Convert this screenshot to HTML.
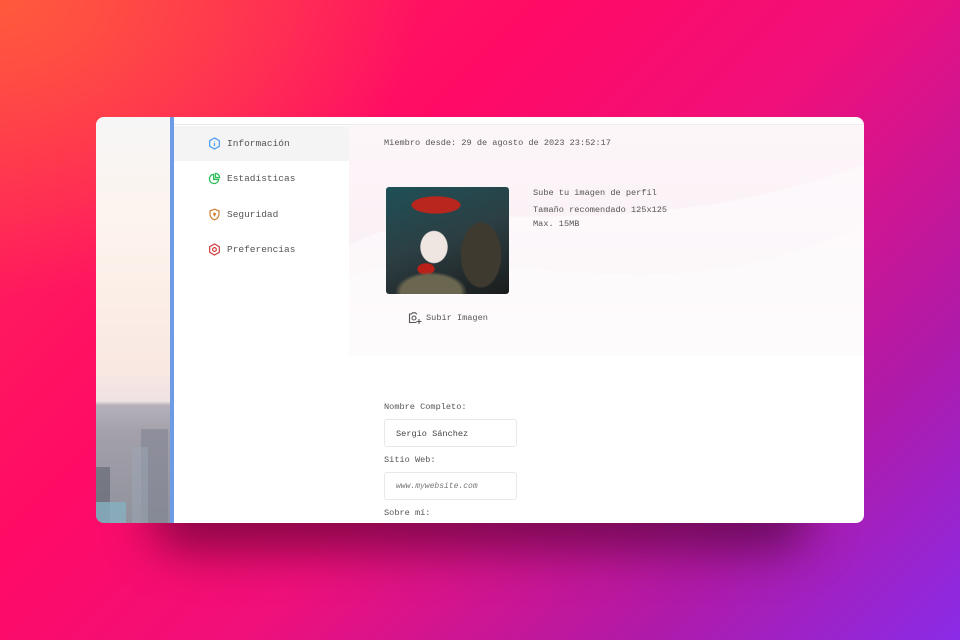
<!DOCTYPE html>
<html><head><meta charset="utf-8"><style>
*{margin:0;padding:0;box-sizing:border-box}
body{width:960px;height:640px;overflow:hidden;position:relative;font-family:"Liberation Mono",monospace;
background:radial-gradient(ellipse 600px 420px at 0% 0%,#ff5a3c 0%,rgba(255,60,70,0) 70%),linear-gradient(135deg,#ff2a55 0%,#ff0a66 35%,#f0107a 55%,#b01aa8 80%,#8a2be8 100%);}
.shadow{position:absolute;left:150px;top:480px;width:660px;height:70px;background:rgba(60,0,40,.6);filter:blur(24px);border-radius:40px}
.win{position:absolute;left:96px;top:117px;width:768px;height:406px;border-radius:8px;overflow:hidden;background:#fff}
.photo{position:absolute;left:0;top:0;width:74px;height:406px;background:linear-gradient(180deg,#f7f6f6 0%,#fdf3ec 30%,#f9e8e2 62%,#efe2e2 70%,#b5b0b9 71%,#a3a0aa 78%,#9a99a4 88%,#8f929c 100%)}
.bld{position:absolute;background:#7d8290;opacity:.55}
.bar{position:absolute;left:74px;top:0;width:4px;height:406px;background:#6d9be6}
.side{position:absolute;left:78px;top:0;width:175px;height:406px;background:#fff;border-top:1px solid #e8e8e8;margin-top:7px}
.item{position:absolute;left:0;width:175px;height:35px;display:flex;align-items:center;padding-left:34px;font-size:9.5px;color:#555}
.item svg{width:13px;height:13px;margin-right:6px}
.main{position:absolute;left:253px;top:0;width:515px;height:406px}
.hero{position:absolute;left:0;top:7px;width:515px;height:232px;border-top:1px solid #eee;background:linear-gradient(180deg,#fdf6f9,#faf0f5 60%,#fbf3f7)}
.t{position:absolute;font-size:8.6px;color:#555;white-space:nowrap}
.pic{position:absolute;top:70px;width:123px;height:107px;border-radius:3px;overflow:hidden;
background:radial-gradient(ellipse 22px 26px at 48px 60px,#efe6e2 60%,transparent 64%),radial-gradient(ellipse 34px 12px at 50px 18px,#b8261e 70%,transparent 74%),radial-gradient(ellipse 6px 4px at 50px 58px,#a01a1a 70%,transparent 74%),radial-gradient(ellipse 28px 45px at 95px 68px,#3e3a30 70%,transparent 74%),radial-gradient(ellipse 50px 28px at 45px 105px,#6a6650 60%,transparent 72%),radial-gradient(ellipse 12px 8px at 40px 82px,#b82018 70%,transparent 74%),linear-gradient(160deg,#1e5058,#2c3e42 50%,#1a1c1c)}
.inp{position:absolute;width:133px;height:28px;border:1px solid #e8e8e8;border-radius:3px;font-size:8.6px;color:#444;padding:9px 0 0 11px}
</style></head><body>
<div class="shadow"></div>
<div class="win">
 <div class="photo">
  <div class="bld" style="left:45px;top:312px;width:27px;height:94px"></div>
  <div class="bld" style="left:0;top:350px;width:14px;height:56px;background:#5a5e68"></div>
  <div class="bld" style="left:36px;top:330px;width:16px;height:76px;background:#9aa6b2"></div>
  <div class="bld" style="left:0;top:385px;width:30px;height:21px;background:#86b0c0;opacity:.8"></div>
 </div>
 <div class="bar"></div>
 <div class="side">
  <div class="item" style="top:1px;background:#f4f4f4"><svg viewBox="0 0 14 14" fill="none" stroke="#4a9df0" stroke-width="1.3"><path d="M7 1l5.2 3v6L7 13 1.8 10V4z"/><path d="M7 6.3v3.5M7 4.3v.6"/></svg>Información</div>
  <div class="item" style="top:36px"><svg viewBox="0 0 14 14" fill="none" stroke="#2ebd5a" stroke-width="1.4"><path d="M6 2.5a5 5 0 1 0 5.5 5.5H6z"/><path d="M8 1.5v4.5h4.5A4.5 4.5 0 0 0 8 1.5z"/></svg>Estadísticas</div>
  <div class="item" style="top:72px"><svg viewBox="0 0 14 14" fill="none" stroke="#d08030" stroke-width="1.3"><path d="M7 1.3L2.2 3.2v3.5c0 3 2.2 5 4.8 6 2.6-1 4.8-3 4.8-6V3.2z"/><circle cx="7" cy="6.5" r=".9" fill="#d08030"/><path d="M7 7v2"/></svg>Seguridad</div>
  <div class="item" style="top:107px"><svg viewBox="0 0 14 14" fill="none" stroke="#d04040" stroke-width="1.3"><path d="M7 1l5.2 3v6L7 13 1.8 10V4z"/><circle cx="7" cy="7" r="2"/></svg>Preferencias</div>
 </div>
 <div class="main">
  <div class="hero">
   <svg width="515" height="232" style="position:absolute;left:0;top:0"><path d="M0 120 C120 60 260 130 515 40 L515 232 0 232z" fill="#fff" opacity=".45"/><path d="M0 150 C150 110 300 200 515 100 L515 232 0 232z" fill="#fff" opacity=".4"/></svg>
  </div>
  <div class="t" style="left:35px;top:21px">Miembro desde: 29 de agosto de 2023 23:52:17</div>
  <div class="pic" style="left:37px"></div>
  <div class="t" style="left:184px;top:71px">Sube tu imagen de perfil</div>
  <div class="t" style="left:184px;top:88px">Tamaño recomendado 125x125</div>
  <div class="t" style="left:184px;top:102px">Max. 15MB</div>
  <svg style="position:absolute;left:59px;top:194px" width="14" height="14" viewBox="0 0 14 14" fill="none" stroke="#555" stroke-width="1.1"><path d="M9 3H8.5L7.5 1.8h-3L3.5 3H1.5v8.5h7"/><circle cx="6" cy="7" r="2"/><path d="M11 8v5M8.5 10.5h5"/></svg>
  <div class="t" style="left:77px;top:196px">Subir Imagen</div>
  <div class="t" style="left:35px;top:285px">Nombre Completo:</div>
  <div class="inp" style="left:35px;top:302px">Sergio Sánchez</div>
  <div class="t" style="left:35px;top:338px">Sitio Web:</div>
  <div class="inp" style="left:35px;top:355px;font-style:italic;color:#777;font-size:8px">www.mywebsite.com</div>
  <div class="t" style="left:35px;top:391px">Sobre mí:</div>
 </div>
</div>
</body></html>
